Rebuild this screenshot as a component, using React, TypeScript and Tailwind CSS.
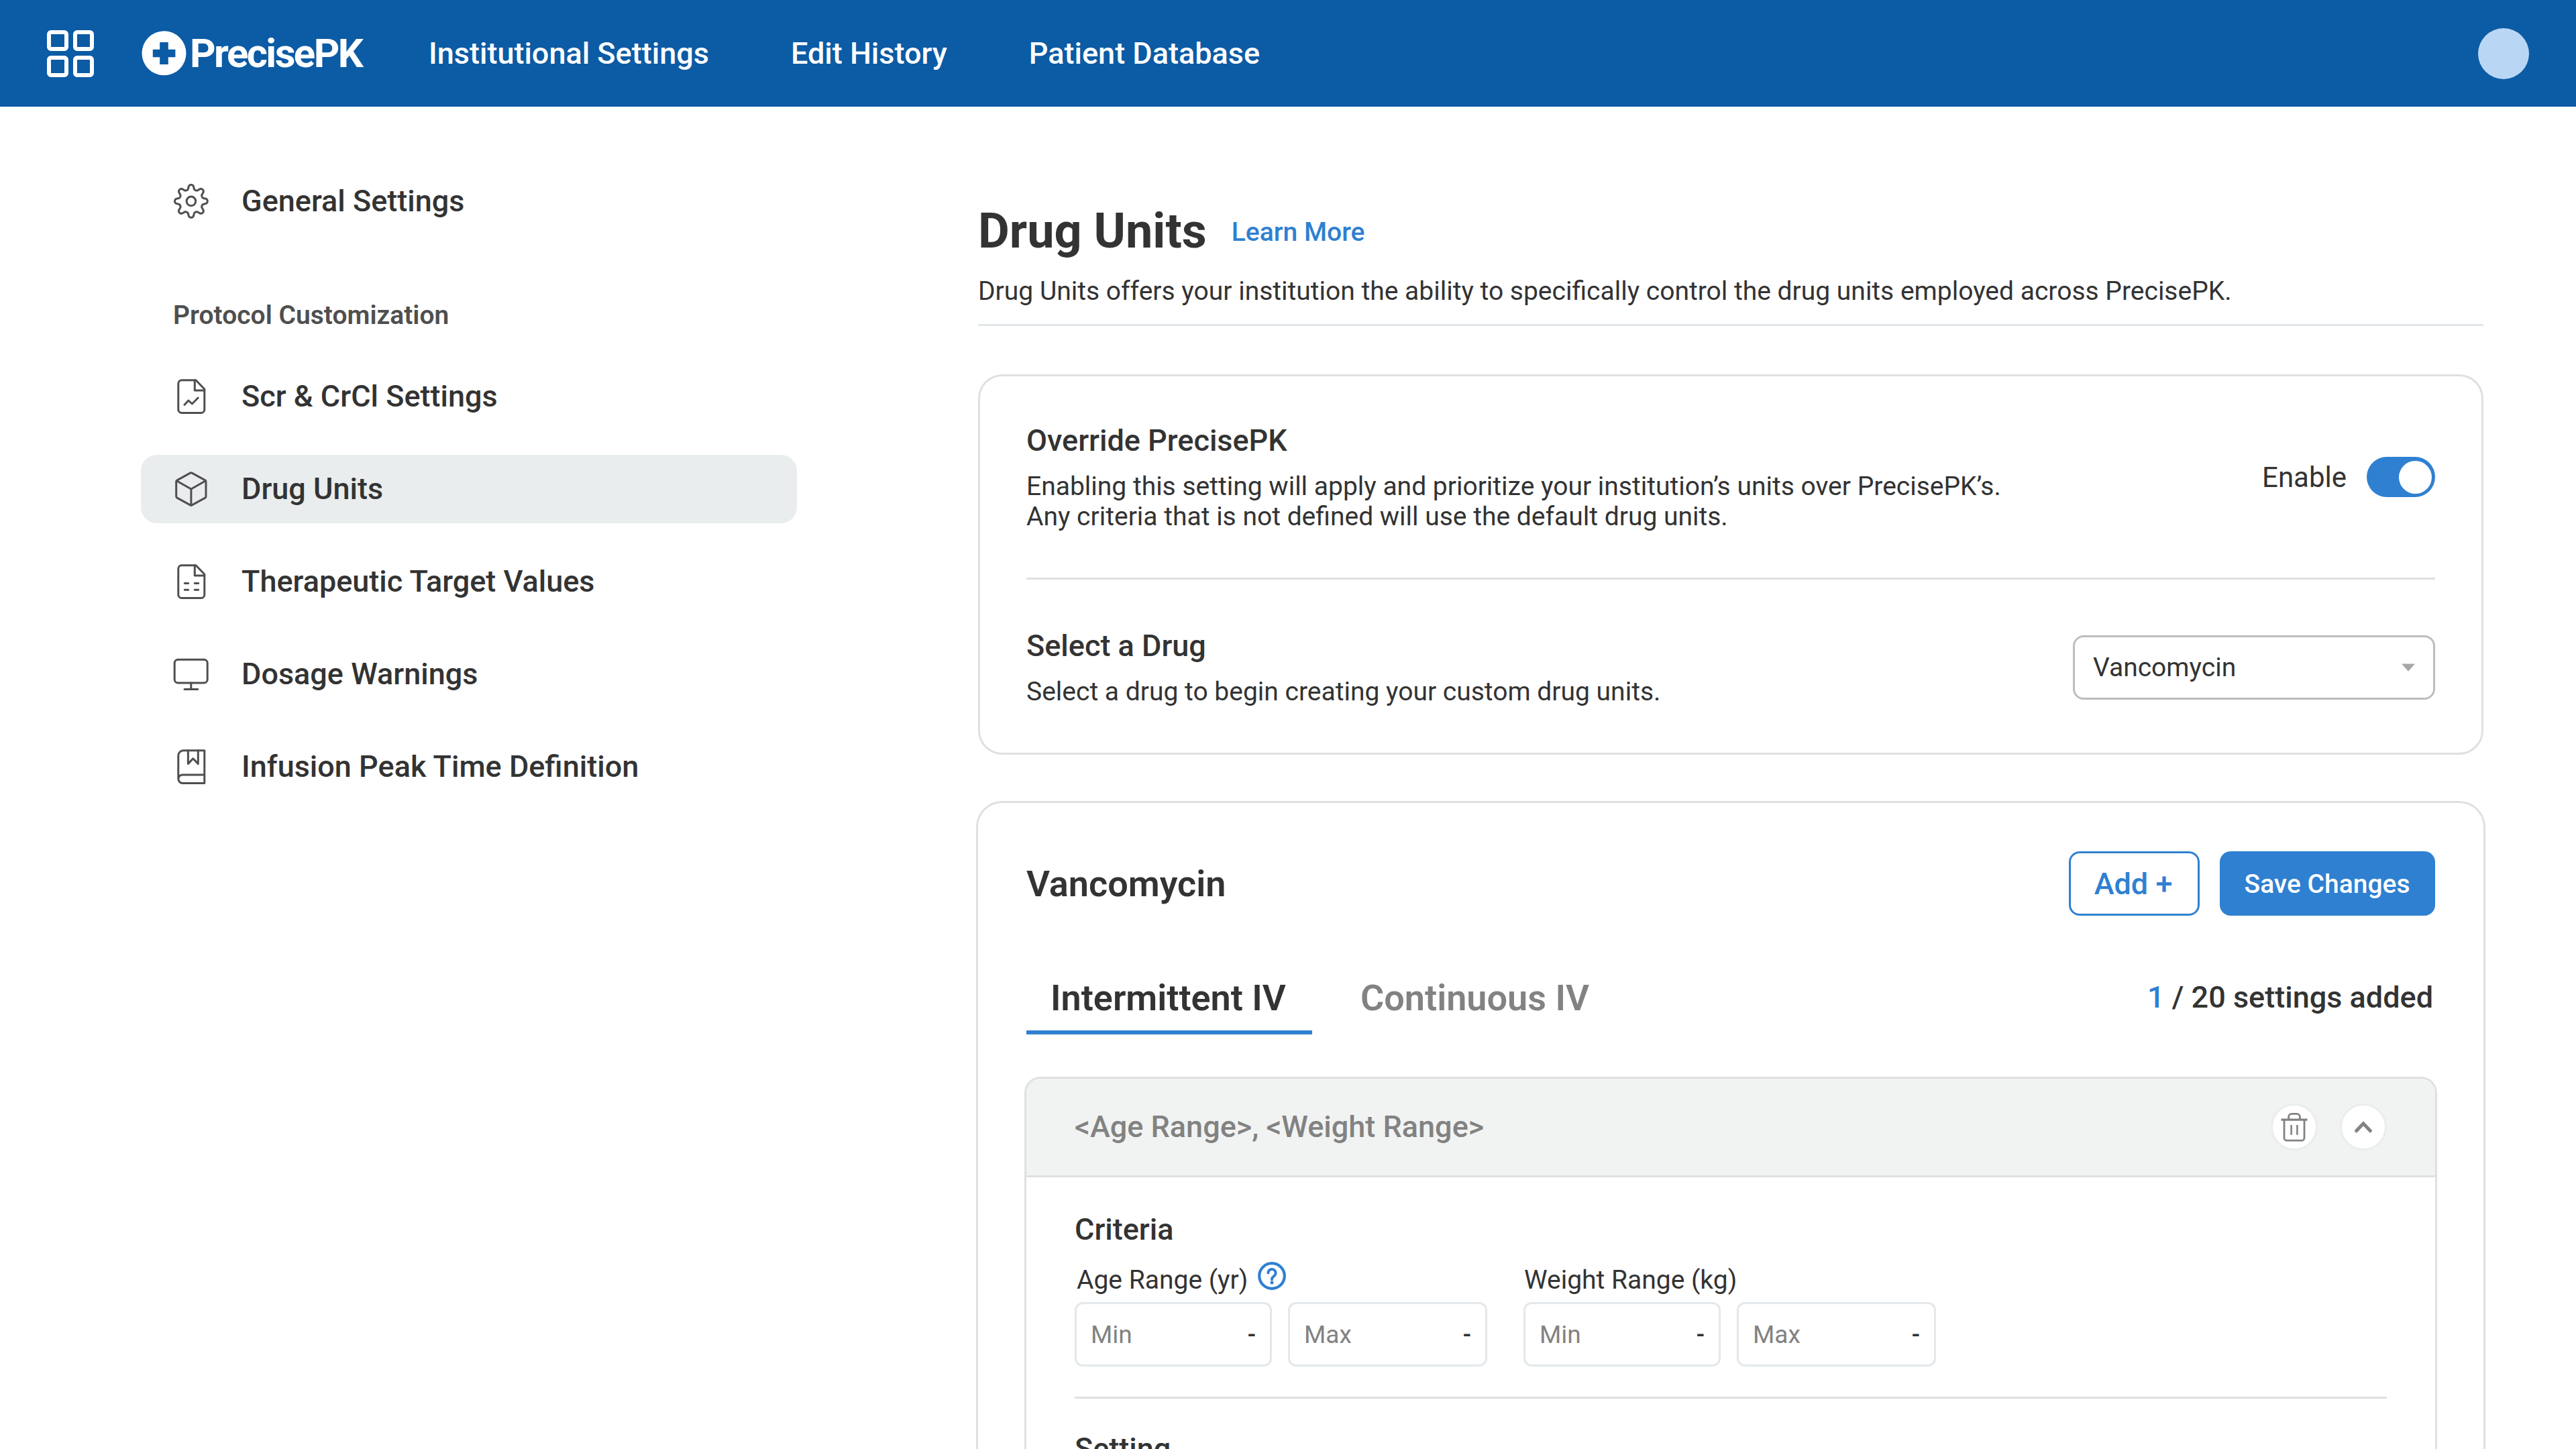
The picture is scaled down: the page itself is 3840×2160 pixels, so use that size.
import type { ReactNode } from "react";

type IconProps = { children: ReactNode };

function NavIcon({ children }: IconProps) {
  return (
    <svg
      className="size-[54px] shrink-0"
      viewBox="0 0 54 54"
      fill="none"
      stroke="#4f4f4f"
      strokeWidth="3"
      strokeLinejoin="round"
      strokeLinecap="round"
    >
      {children}
    </svg>
  );
}

// Eight-toothed outline: the radius follows a flattened cosine around the hub.
const gearPath = (() => {
  const points: string[] = [];
  for (let i = 0; i < 360; i += 1.5) {
    const a = (i * Math.PI) / 180;
    const r = 21 + (3.4 * Math.tanh(1.6 * Math.cos(8 * a) - 0.1)) / Math.tanh(1.6);
    points.push(`${(26.9 + r * Math.cos(a)).toFixed(2)} ${(26.9 + r * Math.sin(a)).toFixed(2)}`);
  }
  return `M${points.join("L")}Z`;
})();

const Gear = () => (
  <NavIcon>
    <path d={gearPath} />
    <circle cx="26.9" cy="26.9" r="6.8" />
  </NavIcon>
);

const FileOutline = () => (
  <>
    <path d="M34 2.8H12.8a5 5 0 0 0-5 5v38.7a5 5 0 0 0 5 5h29a5 5 0 0 0 5-5V16Z" />
    <path d="M32.3 2.8v15.1h14.5" />
  </>
);

const FileChart = () => (
  <NavIcon>
    <FileOutline />
    <path d="M17 39.3l6-6.3 5.3 5L37.3 29" />
  </NavIcon>
);

const FileTable = () => (
  <NavIcon>
    <FileOutline />
    <path d="M17.3 29.5h5.4M32.3 29.5h5.4M17.3 39.3h5.4M32.3 39.3h5.4" />
  </NavIcon>
);

const Cube = () => (
  <NavIcon>
    <path d="M26 2.9 6 13.9a2.4 2.4 0 0 0-1.3 2.1v22a2.4 2.4 0 0 0 1.3 2.1l20 11a2 2 0 0 0 1.8 0l20-11a2.4 2.4 0 0 0 1.2-2.1V16a2.4 2.4 0 0 0-1.2-2.1l-20-11a2 2 0 0 0-1.8 0Z" />
    <path d="M5.3 14.8 26.9 27l21.5-12.2M26.9 27v24" />
  </NavIcon>
);

const Monitor = () => (
  <NavIcon>
    <rect x="2.2" y="5.3" width="49" height="34.6" rx="5" />
    <path d="M26.8 40v9.5M17 49.5h19.8" />
  </NavIcon>
);

const Book = () => (
  <NavIcon>
    <path d="M7.8 45.2V10.3a7.5 7.5 0 0 1 7.5-7.5h31.5v48.7H14.2a6.3 6.3 0 0 1 0-12.6h32.6" />
    <path d="M22.4 2.8v19.8l7.4-7.8 7.5 7.8V2.8" />
  </NavIcon>
);

function SideItem({ icon, label, active }: { icon: ReactNode; label: string; active?: boolean }) {
  return (
    <a
      className={`flex h-[102px] items-center gap-12 rounded-[24px] pl-12 text-[45px] leading-[54px] font-medium ${
        active ? "bg-[#e9edee]" : ""
      }`}
    >
      {icon}
      <span>{label}</span>
    </a>
  );
}

function Header() {
  return (
    <header className="flex h-[159px] shrink-0 items-center bg-[#0c5ba5] pr-[70px] pl-[70px] text-white">
      <div className="mr-[71px] grid size-[70px] grid-cols-2 gap-[7px]">
        {[0, 1, 2, 3].map((i) => (
          <span key={i} className="rounded-[6px] border-[6px] border-white" />
        ))}
      </div>
      <div className="flex w-[428px] items-center">
        <svg className="size-[67px] shrink-0" viewBox="0 0 67 67">
          <circle cx="33.5" cy="33.3" r="33" fill="#fff" />
          <path d="M27.2 17h12.6v10.7h10.6v11.6H39.8v10.6H27.2V39.3H16.8V27.7h10.4Z" fill="#0c5ba5" />
        </svg>
        <span className="ml-[5px] text-[60px] leading-none font-bold tracking-[-2.6px]">PrecisePK</span>
      </div>
      <nav className="flex gap-[122px] text-[45px] leading-[54px] font-medium">
        <a>Institutional Settings</a>
        <a>Edit History</a>
        <a>Patient Database</a>
      </nav>
      <span className="ml-auto size-[76px] rounded-full bg-[#b9d7f4]" />
    </header>
  );
}

function Field({ label, wide }: { label: string; wide?: boolean }) {
  return (
    <div
      className={`flex h-24 items-center justify-between rounded-[12px] border-[3px] border-[#e3e8eb] pt-px pr-[21px] pl-[21px] leading-[48px] ${
        wide ? "w-[297px]" : "w-[294px]"
      }`}
    >
      <span className="text-[37px] text-[#828282]">{label}</span>
      <span className="text-[36px] font-medium">-</span>
    </div>
  );
}

function RangeGroup({ label, help }: { label: string; help?: boolean }) {
  return (
    <div className="w-[615px]">
      <div className={`flex h-12 items-center gap-[15px] pt-px text-[39px] leading-[48px] ${help ? "pl-[3px]" : "pl-px"}`}>
        <span>{label}</span>
        {help && (
          <svg className="-mt-[11px] size-[42px]" viewBox="0 0 42 42" fill="none" stroke="#2f80d1">
            <circle cx="21" cy="21" r="18.8" strokeWidth="4.2" />
            <path
              d="M15.4 16.6a5.6 5.6 0 1 1 8.6 4.7c-1.9 1.3-3 2.3-3 4.6v.6"
              strokeWidth="3.9"
              strokeLinecap="round"
            />
            <circle cx="21" cy="31" r="2.5" fill="#2f80d1" stroke="none" />
          </svg>
        )}
      </div>
      <div className="mt-[10px] flex justify-between">
        <Field label="Min" />
        <Field label="Max" wide />
      </div>
    </div>
  );
}

function SettingPanel() {
  return (
    <div className="-mx-[3px] mt-[63px] h-[800px] rounded-[24px] border-[3px] border-[#dfe1e1]">
      <div className="flex h-[147px] items-center rounded-t-[21px] border-b-[3px] border-[#dfe1e1] bg-[#f1f3f2] px-[72px]">
        <span className="text-[45px] leading-[54px] font-medium text-[#828282]">
          {"<Age Range>, <Weight Range>"}
        </span>
        <div className="ml-auto flex gap-[33px]">
          <button className="flex size-[70px] items-center justify-center rounded-full border-[3px] border-[#e9eded] bg-white">
            <svg className="size-[46px]" viewBox="0 0 46 46" fill="none" stroke="#828282" strokeWidth="2.8">
              <path d="M3.5 12.2h39" strokeWidth="3.2" />
              <path d="M8 12.4v26.8a4 4 0 0 0 4 4h22a4 4 0 0 0 4-4V12.4" />
              <path d="M14.6 12.2V8a4.6 4.6 0 0 1 4.6-4.6h7.6A4.6 4.6 0 0 1 31.4 8v4.2" />
              <path d="M18.6 20v14.8M27.4 20v14.8" strokeWidth="2.6" />
            </svg>
          </button>
          <button className="flex size-[70px] items-center justify-center rounded-full border-[3px] border-[#e9eded] bg-white">
            <svg className="size-[30px]" viewBox="0 0 30 30" fill="none" stroke="#828282" strokeWidth="5">
              <path d="M4.6 20.8 15 9.8l10.4 11" strokeLinecap="round" />
            </svg>
          </button>
        </div>
      </div>
      <div className="px-[72px] pt-[51px]">
        <h3 className="text-[45px] leading-[54px] font-medium">Criteria</h3>
        <div className="mt-[23px] flex gap-[54px]">
          <RangeGroup label="Age Range (yr)" help />
          <RangeGroup label="Weight Range (kg)" />
        </div>
        <div className="mt-[45px] h-[3px] bg-[#dfe1e1]" />
        <h3 className="mt-12 text-[45px] leading-[54px] font-medium">Setting</h3>
      </div>
    </div>
  );
}

export default function App() {
  return (
    <div className="flex h-[2160px] w-[3840px] flex-col overflow-hidden bg-white font-[Roboto,sans-serif] text-[#333333]">
      <Header />
      <div className="flex min-h-0 flex-1">
        <aside className="mr-[270px] ml-[210px] w-[978px] pt-[90px]">
          <SideItem icon={<Gear />} label="General Settings" />
          <h2 className="mt-[95px] mb-[45px] pl-12 text-[39px] leading-[49px] font-semibold text-[#4f4f4f]">
            Protocol Customization
          </h2>
          <div className="flex flex-col gap-9">
            <SideItem icon={<FileChart />} label="Scr & CrCl Settings" />
            <SideItem icon={<Cube />} label="Drug Units" active />
            <SideItem icon={<FileTable />} label="Therapeutic Target Values" />
            <SideItem icon={<Monitor />} label="Dosage Warnings" />
            <SideItem icon={<Book />} label="Infusion Peak Time Definition" />
          </div>
        </aside>

        <main className="w-[2244px] pt-[144px]">
          <div className="flex h-[84px] items-center gap-[37px]">
            <h1 className="text-[72px] leading-[84px] font-bold">Drug Units</h1>
            <a className="pt-px text-[39px] leading-[48px] font-medium text-[#2f80d1]">Learn More</a>
          </div>
          <p className="mt-[24px] text-[39px] leading-[46px]">
            Drug Units offers your institution the ability to specifically control the drug units employed across
            PrecisePK.
          </p>
          <div className="mt-[26px] h-[3px] bg-[#e1e6ea]" />

          <section className="mt-[72px] rounded-[36px] border-[3px] border-[#e0e0e0] px-[69px] py-[69px]">
            <div className="flex h-[162px] items-center justify-between">
              <div className="pt-px">
                <h2 className="text-[45px] leading-[54px] font-medium">Override PrecisePK</h2>
                <p className="mt-[19px] text-[39px] leading-[45px]">
                  Enabling this setting will apply and prioritize your institution’s units over PrecisePK’s.
                  <br />
                  Any criteria that is not defined will use the default drug units.
                </p>
              </div>
              <div className="flex items-center gap-[30px]">
                <span className="pt-[2px] text-[42px] leading-[54px]">Enable</span>
                <span className="flex h-[60px] w-[102px] items-center justify-end rounded-full bg-[#2f80d1] pr-[5px]">
                  <span className="size-[49px] rounded-full bg-white" />
                </span>
              </div>
            </div>
            <div className="mt-[69px] h-[3px] bg-[#e0e0e0]" />
            <div className="mt-[72px] flex h-[117px] items-center justify-between">
              <div className="pt-px">
                <h2 className="text-[45px] leading-[54px] font-medium">Select a Drug</h2>
                <p className="mt-[19px] text-[39px] leading-[45px]">
                  Select a drug to begin creating your custom drug units.
                </p>
              </div>
              <div className="flex h-24 w-[540px] items-center justify-between rounded-[16px] border-[3px] border-[#bdbdbd] pr-[27px] pl-[27px]">
                <span className="text-[39px] leading-[48px]">Vancomycin</span>
                <svg className="h-[12px] w-[20px]" viewBox="0 0 20 12" fill="#a8a8a8">
                  <path d="M0 0.5h20L10 11.8Z" />
                </svg>
              </div>
            </div>
          </section>

          <section className="-mx-[3px] mt-[69px] h-[1300px] rounded-[39px] border-[3px] border-[#e0e0e0] px-[72px] pt-[72px]">
            <div className="flex h-24 items-center gap-[30px]">
              <h2 className="mr-auto pt-[2px] text-[54px] leading-[66px] font-semibold">Vancomycin</h2>
              <button className="flex h-24 w-[195px] items-center justify-center rounded-[16px] border-[3px] border-[#2f80d1] pt-px pr-[3px] text-[45px] leading-[54px] font-medium text-[#2f80d1]">
                Add +
              </button>
              <button className="flex h-24 w-[321px] items-center justify-center rounded-[16px] bg-[#2f80d1] pt-px pr-px text-[39px] leading-[48px] font-medium text-white">
                Save Changes
              </button>
            </div>
            <div className="mt-[73px] flex h-[104px] gap-9 text-[54px] leading-[66px] font-semibold">
              <div className="flex w-[426px] items-center border-b-[6px] border-[#2f80d1] pt-[2px] pl-9">
                Intermittent IV
              </div>
              <div className="flex w-[414px] items-center border-b-[6px] border-transparent pt-[2px] pl-9 text-[#828282]">
                Continuous IV
              </div>
              <div className="ml-auto flex items-center pr-[3px] pb-[7px] text-[45px] leading-[54px] font-medium">
                <span>
                  <span className="text-[#2f80d1]">1</span> / 20 settings added
                </span>
              </div>
            </div>
            <SettingPanel />
          </section>
        </main>
      </div>
    </div>
  );
}
